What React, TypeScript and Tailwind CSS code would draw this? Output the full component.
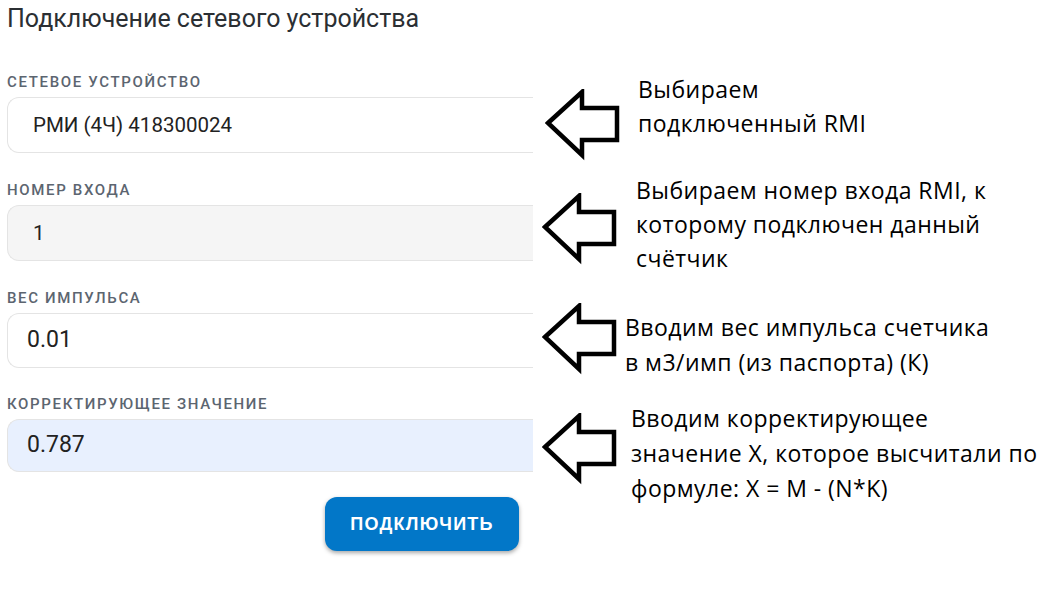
import React from "react";

const roboto = { fontFamily: "Roboto, 'Liberation Sans', sans-serif" };

function Arrow({ className }: { className?: string }) {
  return (
    <svg className={`shrink-0 ${className ?? ""}`} width="78" height="72" viewBox="0 0 78 72" fill="none">
      <polygon
        points="3,34 37,3 37,19 72,19 72,51 37,51 37,66"
        stroke="#000"
        strokeWidth="4.5"
        strokeLinejoin="miter"
        fill="#fff"
      />
    </svg>
  );
}

function Field({
  label,
  value,
  bg,
  h,
  text,
  mb,
}: {
  label: string;
  value: string;
  bg: string;
  h: string;
  text: string;
  mb: string;
}) {
  return (
    <div className={mb}>
      <div className="text-[15px] leading-4 font-medium tracking-[0.11em] text-[#5c6570] mb-[7px]">
        {label}
      </div>
      <div className={`w-[526px] ${h} ${bg} rounded-l-xl border border-r-0 border-[#e4e4e4] flex items-center ${text}`}>
        {value}
      </div>
    </div>
  );
}

function Callout({
  rowClass,
  arrowClass,
  textClass,
  lines,
}: {
  rowClass: string;
  arrowClass: string;
  textClass: string;
  lines: string[];
}) {
  return (
    <div className={`flex items-start ${rowClass}`}>
      <Arrow className={arrowClass} />
      <div className={`whitespace-nowrap ${textClass}`}>
        {lines.map((l, i) => (
          <div key={i}>{l}</div>
        ))}
      </div>
    </div>
  );
}

export default function App() {
  return (
    <div className="flex w-[1050px] h-[605px] bg-white overflow-hidden" style={roboto}>
      <div className="w-[540px] shrink-0 pl-[7px] pt-[5px]">
        <h1 className="text-[25px] leading-7 text-[#2b2f33] font-normal mb-[41px]">
          Подключение сетевого устройства
        </h1>
        <Field
          label="СЕТЕВОЕ УСТРОЙСТВО"
          value="РМИ (4Ч) 418300024"
          bg="bg-white"
          h="h-[56px]"
          text="pl-[25px] text-[20.5px] text-[#222]"
          mb="mb-[29px]"
        />
        <Field
          label="НОМЕР ВХОДА"
          value="1"
          bg="bg-[#f5f5f5]"
          h="h-[56px]"
          text="pl-[25px] text-[20.5px] text-[#222]"
          mb="mb-[29px]"
        />
        <Field
          label="ВЕС ИМПУЛЬСА"
          value="0.01"
          bg="bg-white"
          h="h-[55px]"
          text="pl-[19px] text-[23px] text-[#222]"
          mb="mb-[28px]"
        />
        <Field
          label="КОРРЕКТИРУЮЩЕЕ ЗНАЧЕНИЕ"
          value="0.787"
          bg="bg-[#e8f0fe]"
          h="h-[53px]"
          text="pl-[19px] text-[23px] text-[#222]"
          mb="mb-[25px]"
        />
        <button
          className="ml-[318px] w-[194px] h-[54px] rounded-xl bg-[#0277c8] text-white text-[18px] font-bold tracking-[0.07em] shadow-[0_2px_4px_rgba(0,0,0,0.35)]"
          style={{ fontFamily: "'Liberation Sans', Arial, sans-serif" }}
        >
          ПОДКЛЮЧИТЬ
        </button>
      </div>

      <div
        className="flex flex-col pt-[72px] text-black text-[23px] tracking-[0.02em]"
        style={{ fontFamily: "'Open Sans', 'Noto Sans', sans-serif" }}
      >
        <Callout
          rowClass=""
          arrowClass="ml-[5px] mt-[17px]"
          textClass="ml-[15px] leading-[34px]"
          lines={["Выбираем", "подключенный RMI"]}
        />
        <Callout
          rowClass="mt-[12px]"
          arrowClass="ml-[2px] mt-[20px]"
          textClass="ml-[16px] leading-[34px]"
          lines={["Выбираем номер входа RMI, к", "которому подключен данный", "счётчик"]}
        />
        <Callout
          rowClass="mt-[28px]"
          arrowClass="ml-[2px]"
          textClass="ml-[5px] mt-[7px] leading-[35px]"
          lines={["Вводим вес импульса счетчика", "в м3/имп (из паспорта) (К)"]}
        />
        <Callout
          rowClass="mt-[21px]"
          arrowClass="ml-[2px] mt-[12px]"
          textClass="ml-[11px] leading-[35px]"
          lines={["Вводим корректирующее", "значение X, которое высчитали по", "формуле: X = M - (N*K)"]}
        />
      </div>
    </div>
  );
}
